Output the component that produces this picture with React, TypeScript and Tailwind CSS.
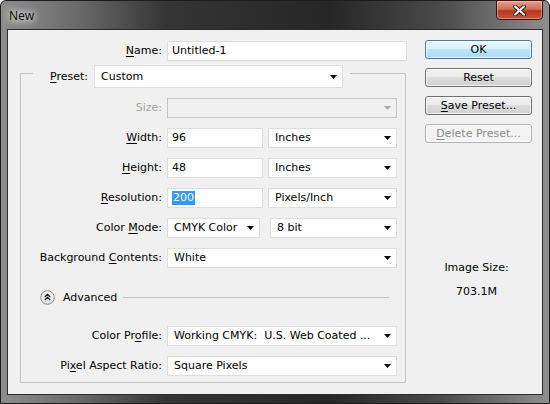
import type { ReactNode } from 'react'

const font = "font-['DejaVu_Sans',sans-serif] text-[11px] leading-[14px]"

function Arrow({ disabled }: { disabled?: boolean }) {
  return (
    <svg width="7" height="4" viewBox="0 0 7 4" className="shrink-0">
      <path d="M0 0H7L3.5 4Z" fill={disabled ? '#a8a8a8' : '#000'} />
    </svg>
  )
}

function Select({ value, w, h = 'h-[20px]', disabled }: { value?: ReactNode; w: string; h?: string; disabled?: boolean }) {
  return (
    <div
      className={`${w} ${h} flex items-center justify-between pl-[6px] pr-[5px] border ${
        disabled ? 'bg-[#f0f0f0] border-[#c6c6c6]' : 'bg-white border-[#dddddd]'
      }`}
    >
      <span className="whitespace-pre text-black">{value}</span>
      <Arrow disabled={disabled} />
    </div>
  )
}

function Input({ value, w }: { value: ReactNode; w: string }) {
  return (
    <div className={`${w} h-[20px] flex items-center pl-[4px] bg-white border border-[#dddddd] text-black`}>
      {value}
    </div>
  )
}

function U({ children }: { children: ReactNode }) {
  return <span className="underline underline-offset-[2px] decoration-1">{children}</span>
}

function Row({ label, children, className = '', muted }: { label: ReactNode; children: ReactNode; className?: string; muted?: boolean }) {
  return (
    <div className={`flex items-center ${className}`}>
      <div className={`w-[146px] pr-[5px] text-right ${muted ? 'text-[#a3a3a3]' : 'text-black'}`}>{label}</div>
      {children}
    </div>
  )
}

function Button({ children, kind }: { children: ReactNode; kind?: 'default' | 'disabled' }) {
  const look =
    kind === 'default'
      ? 'border-[#3c7fb1] bg-[linear-gradient(to_bottom,#eaf6fd_0%,#d9f0fc_49%,#bee6fd_50%,#a7d9f5_100%)] text-black'
      : kind === 'disabled'
        ? 'border-[#adb2b5] bg-[#f4f4f4] text-[#8a8a8a]'
        : 'border-[#707070] bg-[linear-gradient(to_bottom,#f2f2f2_0%,#ebebeb_49%,#dddddd_50%,#cfcfcf_100%)] text-black'
  return (
    <div className={`w-[107px] h-[19px] rounded-[3px] border flex items-center justify-center shadow-[inset_0_0_0_1px_rgba(255,255,255,0.7)] ${look}`}>
      {children}
    </div>
  )
}

export default function App() {
  return (
    <div className="w-[550px] h-[404px] flex flex-col rounded-t-[6px] border border-[#1c1c1c] bg-[linear-gradient(to_right,#8d8d8d_0%,#6a6a6a_14%,#353535_30%,#262626_60%,#4a4a4a_80%,#8e8e8e_100%)]">
      {/* Title bar */}
      <div className="h-[28px] flex items-start justify-between pl-[8px] pr-[6px]">
        <div className="mt-[7px] font-['Noto_Sans',sans-serif] text-[12px] leading-[16px] text-[#111] [text-shadow:0_0_6px_#ffffff,0_0_10px_#ffffff]">
          New
        </div>
        <div className="w-[47px] h-[20px] -mt-px rounded-b-[4px] border border-[#3b1208] flex items-center justify-center bg-[linear-gradient(to_bottom,#e3a08f_0%,#cf6f58_45%,#b8361e_55%,#c9523a_100%)] shadow-[inset_0_0_0_1px_rgba(255,220,210,0.45)]">
          <svg width="13" height="11" viewBox="0 0 13 11">
            <path d="M2 1.5L11 9.5M11 1.5L2 9.5" stroke="#3a1108" strokeWidth="4" strokeLinecap="round" />
            <path d="M2 1.5L11 9.5M11 1.5L2 9.5" stroke="#ffffff" strokeWidth="2.2" strokeLinecap="round" />
          </svg>
        </div>
      </div>

      {/* Client area */}
      <div className={`mx-[6px] mb-[8px] flex-1 border border-[#2b2b2b] bg-[#f0f0f0] flex ${font}`}>
        <div className="pl-[12px] pt-[11px]">
          <div className="flex items-center">
            <div className="w-[147px] pr-[5px] text-right text-black">
              <U>N</U>ame:
            </div>
            <Input value="Untitled-1" w="w-[240px]" />
          </div>

          {/* Group box */}
          <div className="mt-[12px] w-[386px] border border-[#c3c3c3] pb-[6px]">
            <div className="-mt-[9px] ml-[12px] w-[317px] flex items-center bg-[#f0f0f0] pl-[17px]">
              <div className="w-[44px] text-black">
                <U>P</U>reset:
              </div>
              <Select value="Custom" w="w-[249px]" h="h-[23px]" />
            </div>

            <Row label="Size:" muted className="mt-[10px]">
              <Select w="w-[230px]" disabled />
            </Row>
            <Row label={<><U>W</U>idth:</>} className="mt-[10px]">
              <Input value="96" w="w-[96px]" />
              <div className="ml-[5px]">
                <Select value="Inches" w="w-[129px]" />
              </div>
            </Row>
            <Row label={<><U>H</U>eight:</>} className="mt-[10px]">
              <Input value="48" w="w-[96px]" />
              <div className="ml-[5px]">
                <Select value="Inches" w="w-[129px]" />
              </div>
            </Row>
            <Row label={<><U>R</U>esolution:</>} className="mt-[10px]">
              <Input value={<span className="bg-[#3399ff] text-white px-px">200</span>} w="w-[96px]" />
              <div className="ml-[5px]">
                <Select value="Pixels/Inch" w="w-[129px]" />
              </div>
            </Row>
            <Row label={<>Color <U>M</U>ode:</>} className="mt-[10px]">
              <Select value="CMYK Color" w="w-[93px]" />
              <div className="ml-[10px]">
                <Select value="8 bit" w="w-[127px]" />
              </div>
            </Row>
            <Row label={<>Background <U>C</U>ontents:</>} className="mt-[10px]">
              <Select value="White" w="w-[230px]" />
            </Row>

            {/* Advanced */}
            <div className="mt-[22px] h-[15px] flex items-center pl-[19px] pr-[16px]">
              <svg width="15" height="15" viewBox="0 0 15 15" className="shrink-0">
                <defs>
                  <linearGradient id="adv" x1="0" y1="0" x2="0" y2="1">
                    <stop offset="0" stopColor="#ffffff" />
                    <stop offset="1" stopColor="#dcdcdc" />
                  </linearGradient>
                </defs>
                <circle cx="7.5" cy="7.5" r="6.8" fill="url(#adv)" stroke="#8a8a8a" strokeWidth="1" />
                <path d="M4.8 7L7.5 4.4L10.2 7M4.8 10L7.5 7.4L10.2 10" fill="none" stroke="#1a1a1a" strokeWidth="1.3" />
              </svg>
              <span className="ml-[8px] text-black">Advanced</span>
              <div className="ml-[6px] flex-1 h-px bg-[#c3c3c3]" />
            </div>

            <Row label={<>Color Pr<U>o</U>file:</>} className="mt-[21px]">
              <Select value="Working CMYK:  U.S. Web Coated ..." w="w-[230px]" />
            </Row>
            <Row label={<>Pi<U>x</U>el Aspect Ratio:</>} className="mt-[10px]">
              <Select value="Square Pixels" w="w-[230px]" />
            </Row>
          </div>
        </div>

        {/* Buttons */}
        <div className="ml-[18px] pt-[10px] flex flex-col w-[107px]">
          <Button kind="default">OK</Button>
          <div className="mt-[9px]">
            <Button>Reset</Button>
          </div>
          <div className="mt-[9px]">
            <Button>
              <U>S</U>ave Preset...
            </Button>
          </div>
          <div className="mt-[9px]">
            <Button kind="disabled">
              <U>D</U>elete Preset...
            </Button>
          </div>
          <div className="mt-[118px] text-center text-black pr-[4px]">Image Size:</div>
          <div className="mt-[10px] text-center text-black pr-[4px]">703.1M</div>
        </div>
      </div>
    </div>
  )
}
